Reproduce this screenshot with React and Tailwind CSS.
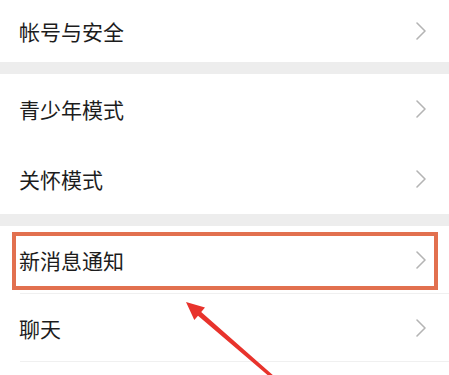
import React from 'react';

// --- Settings list with a highlighted row ---

const Chevron = () => (
  <svg width="12" height="20" viewBox="0 0 12 20" fill="none" className="shrink-0">
    <path d="M2 2 L10 10 L2 18" stroke="#b4b4b4" strokeWidth="1.6" strokeLinecap="round" strokeLinejoin="round" />
  </svg>
);

const Fila = ({ titulo, alto, borde }) => (
  <div className={`relative flex items-center justify-between pl-[19px] pr-[22px] bg-white ${alto}`}>
    <span className="text-[21px] leading-none text-[#1c1c1c]">{titulo}</span>
    <Chevron />
    {borde && <div className="absolute left-[20px] right-0 bottom-0 h-px bg-[#f0f0f0]" />}
  </div>
);

const Banda = () => <div className="h-[12px] bg-[#ededed]" />;

export default function App() {
  return (
    <div
      className="relative w-[449px] h-[375px] overflow-hidden bg-white"
      style={{ fontFamily: '"Noto Sans CJK SC", "Noto Sans", sans-serif' }}
    >
      <div className="flex flex-col">
        <Fila titulo="帐号与安全" alto="h-[62px]" />
        <Banda />
        <Fila titulo="青少年模式" alto="h-[70px]" />
        <Fila titulo="关怀模式" alto="h-[70px]" />
        <Banda />
        <Fila titulo="新消息通知" alto="h-[68px]" borde />
        <Fila titulo="聊天" alto="h-[68px]" borde />
      </div>

      {/* recuadro naranja */}
      <div className="absolute left-[12px] top-[232px] w-[426px] h-[58px] border-[4px] border-[#e2704f]" />

      {/* flecha roja */}
      <svg className="absolute inset-0" width="449" height="375" viewBox="0 0 449 375">
        <polygon
          points="186,302 205,307.5 201.2,311.9 283,384 281,386.5 198,315.7 194.3,320"
          fill="#e8332c"
        />
      </svg>
    </div>
  );
}
